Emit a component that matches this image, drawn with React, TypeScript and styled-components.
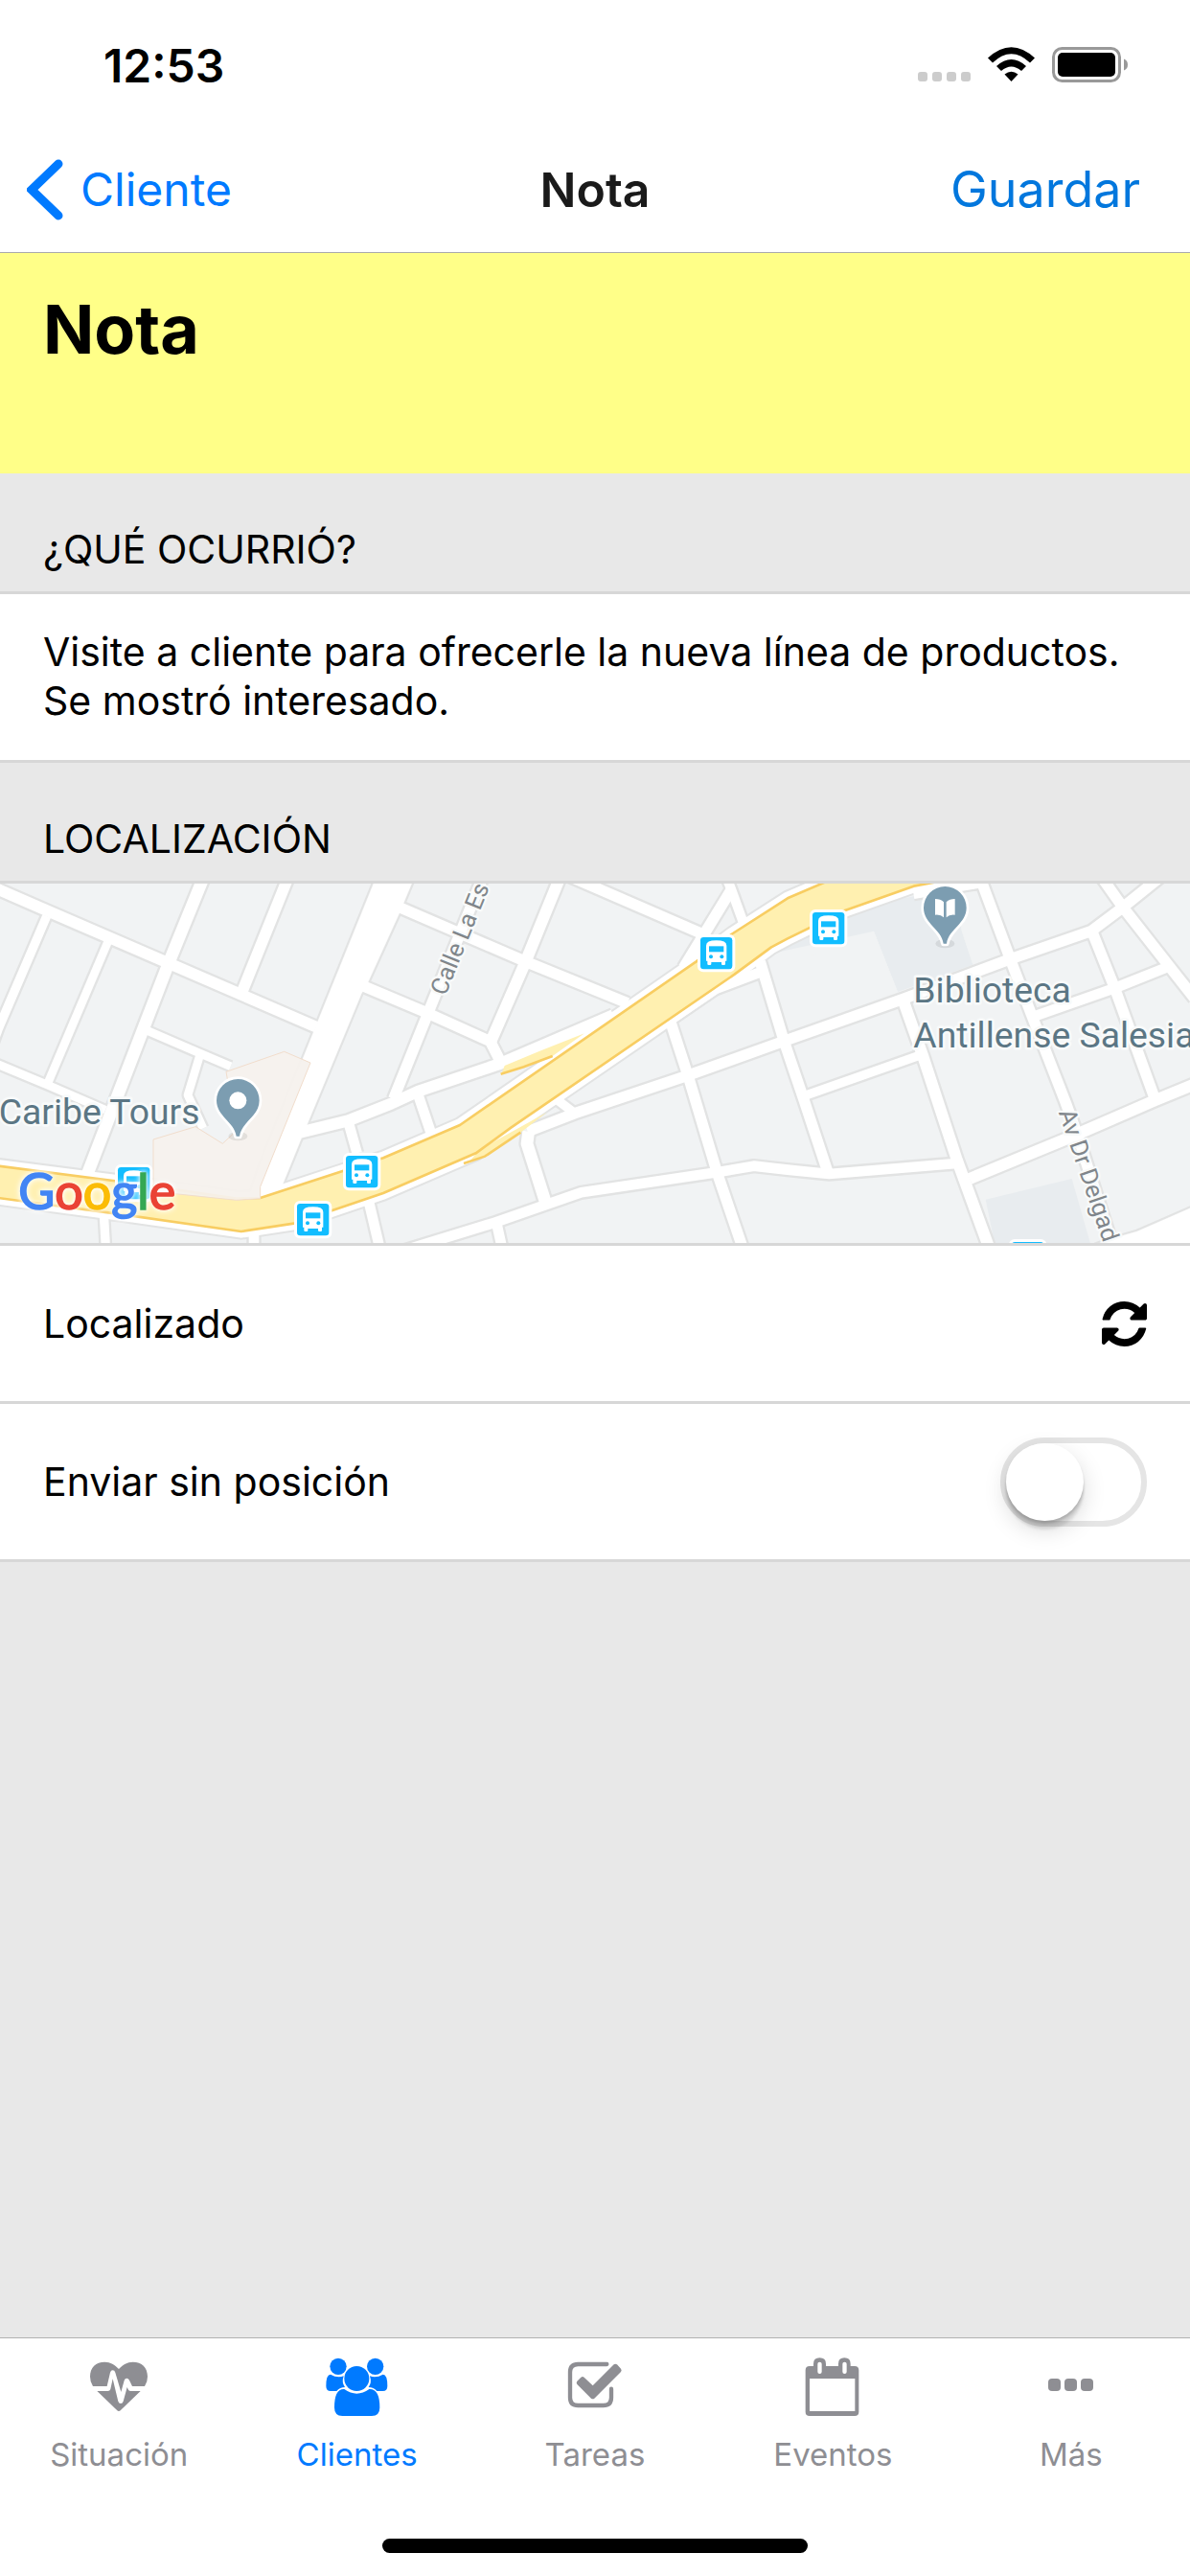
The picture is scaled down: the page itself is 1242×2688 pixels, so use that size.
import React, { useState } from 'react';
import styled, { createGlobalStyle } from 'styled-components';

const GlobalStyle = createGlobalStyle`
  * {
    box-sizing: border-box;
  }

  body {
    margin: 0;
    background: #ffffff;
    color: #000000;
    font-family: Inter, 'Liberation Sans', sans-serif;
  }

  button,
  input,
  textarea {
    margin: 0;
    padding: 0;
    border: none;
    background: none;
    color: inherit;
    font: inherit;
  }

  h1,
  h2,
  p {
    margin: 0;
  }
`;

/* ---------- map data ---------- */

interface Road {
  d: string;
  w: number;
}

const ROADS: Road[] = [
  { d: 'M-20 78L150 152L525 314L990 515', w: 35 },
  { d: 'M640 40L530 310L445 530L268 990', w: 38 },
  { d: 'M905 40L760 400', w: 35 },
  { d: 'M146 168L-5 520L-30 590', w: 28 },
  { d: 'M337 250L150 690', w: 26 },
  { d: 'M-20 626L150 697L330 775', w: 26 },
  { d: 'M460 526L620 595L722 638', w: 26 },
  { d: 'M625 606L588 728L636 832', w: 26 },
  { d: 'M1140 388L1340 472L1535 560L1568 625', w: 34 },
  { d: 'M1250 140L1650 312L1965 440', w: 34 },
  { d: 'M1756 40L1645 312L1537 560', w: 36 },
  { d: 'M1510 50L1340 472L1232 740', w: 34 },
  { d: 'M940 845L1090 808L1225 755L1310 716L1560 632L1920 478', w: 36 },
  { d: 'M1090 810L1118 910', w: 32 },
  { d: 'M1310 730L1354 860', w: 32 },
  { d: 'M1780 42L2200 224', w: 34 },
  { d: 'M2140 330L2195 240L2290 85', w: 34 },
  { d: 'M2272 40L2290 85L2328 190', w: 30 },
  { d: 'M2390 340L2240 396L2080 505', w: 32 },
  { d: 'M2100 500L2155 670L2245 970L2330 1220', w: 34 },
  { d: 'M2380 310L2455 560L2516 740L2592 970', w: 34 },
  { d: 'M1652 842L1800 785L2150 668L2466 555L2826 428L3156 305L3416 215L3516 140L3640 40', w: 34 },
  { d: 'M1735 736L1800 785', w: 28 },
  { d: 'M1655 842L1650 880L1710 1070', w: 38 },
  { d: 'M1240 1222L1540 1130L1820 1033L2245 970L2360 950L2466 962L2596 975L2995 942', w: 32 },
  { d: 'M1555 1130L1575 1220', w: 32 },
  { d: 'M325 1100L332 1220', w: 28 },
  { d: 'M795 1160L795 1220', w: 32 },
  { d: 'M1152 1050L1192 1220', w: 32 },
  { d: 'M3066 40L3166 310L3231 480L3336 750L3376 860L3490 1220', w: 34 },
  { d: 'M2831 440L2891 610L2996 930L3102 1220', w: 36 },
  { d: 'M2526 728L2876 605', w: 28 },
  { d: 'M3421 220L3491 395L3616 740', w: 34 },
  { d: 'M3236 482L3491 393L3661 325', w: 32 },
  { d: 'M3445 40L3516 140L3661 325L3740 425', w: 34 },
  { d: 'M3036 990L3346 862L3616 745L3750 690', w: 36 },
  { d: 'M2860 96L3080 60', w: 36 },
];

const AVENUE = 'M1180 40L1300 40L1250 160L1150 380L1132 410L945 860L880 1020L780 1050L815 945L992 505Z';
const CORNER = 'M3380 1216L3466 1182L3560 1155L3750 1072V1220Z';
const HIGHWAY =
  'M-20 948L400 1002L740 1052L815 1050L1075 965L1200 925L1440 822L2180 310L2290 225L2466 112L2610 50' +
  'H2990L2861 74L2646 150L2466 238L2415 265L2300 350L1600 830L1490 910L1200 1035L920 1130L755 1155L390 1103L-20 1048Z';

const BUS_STOPS = [
  [369, 954],
  [1083, 918],
  [930, 1068],
  [2193, 234],
  [2544, 156],
  [3168, 1188],
];

/* ---------- drawings ---------- */

const BusStop = ({ x, y }: { x: number; y: number }) => (
  <g transform={`translate(${x} ${y})`}>
    <rect x="-9" y="-9" width="118" height="118" rx="18" fill="#fff" />
    <rect width="100" height="100" rx="10" fill="#12bdff" />
    <path
      d="M18 26Q18 10 50 10Q82 10 82 26V74H78V84Q78 87 74 87H70Q66 87 66 84V78H34V84Q34 87 30 87H26Q22 87 22 84V74H18Z"
      fill="#fff"
    />
    <path d="M27 28H73V46H27Z" fill="#12bdff" />
    <circle cx="33" cy="61" r="6" fill="#12bdff" />
    <circle cx="67" cy="61" r="6" fill="#12bdff" />
  </g>
);

const Pin = ({ x, y, children }: { x: number; y: number; children: React.ReactNode }) => (
  <g transform={`translate(${x} ${y})`}>
    <ellipse cx="0" cy="112" rx="30" ry="14" fill="#000" opacity="0.08" />
    <path
      d="M0 -67A67 67 0 0 1 67 0C67 50 12 66 5 112H-5C-12 66 -67 50 -67 0A67 67 0 0 1 0 -67Z"
      fill="#7c9db1"
      stroke="#fff"
      strokeWidth="16"
      strokeLinejoin="round"
      paintOrder="stroke"
    />
    {children}
  </g>
);

const Map = () => (
  <MapCanvas viewBox="0 66 3726 1125" preserveAspectRatio="xMidYMid slice" role="img" aria-label="Mapa">
    <rect y="0" width="3726" height="1260" fill="#f1f3f4" />
    <path d="M2440 280L2736 215L2811 405L3046 320L3011 215L2990 80L2740 130L2440 210Z" fill="#e8ecef" />
    <path d="M2466 320L2736 215L2811 405L2466 520Z" fill="#f1f3f4" />
    <path d="M3086 1055L3356 990L3416 1200H3116Z" fill="#e8ecef" />

    <g fill="none" stroke="#e2e3e3" strokeLinejoin="round">
      {ROADS.map((r) => (
        <path key={r.d} d={r.d} strokeWidth={r.w + 14} />
      ))}
      <path d={AVENUE} strokeWidth="14" />
      <path d={CORNER} strokeWidth="14" />
      <path d={HIGHWAY} strokeWidth="52" />
    </g>
    <g fill="none" stroke="#fff" strokeLinejoin="round">
      {ROADS.map((r) => (
        <path key={r.d} d={r.d} strokeWidth={r.w} />
      ))}
      <path d={AVENUE} fill="#fff" />
      <path d={CORNER} fill="#fff" />
      <path d={HIGHWAY} strokeWidth="40" />
    </g>

    <path d="M1570 662L1580 636L1690 590L1830 535L1730 606Z" fill="#fff0b0" />
    <path d="M1568 662L1640 640L1730 606" fill="none" stroke="#f8cd62" strokeWidth="8" />
    <path d="M1470 936L1518 920L1630 845L1712 782L1500 900Z" fill="#fff0b0" />
    <path d="M1452 942L1518 920L1630 845" fill="none" stroke="#f8cd62" strokeWidth="8" />
    <path d={HIGHWAY} fill="#fff0b0" stroke="#f8cd62" strokeWidth="8" strokeLinejoin="round" />
    <path
      d="M708 655L890 592L972 627L815 1015V1052L740 1057L480 1030V867L612 827L697 880L740 840Z"
      fill="#f5f1ed"
      fillOpacity="0.94"
      stroke="#f1ddcc"
      strokeWidth="3"
    />

    {BUS_STOPS.map(([x, y]) => (
      <BusStop key={x} x={x} y={y} />
    ))}
    <Pin x={745} y={745}>
      <circle r="27" fill="#fff" />
    </Pin>
    <Pin x={2959} y={142}>
      <path d="M-31 -28Q-14 -28 -4 -18V30Q-14 20 -31 22ZM31 -28Q14 -28 4 -18V30Q14 20 31 22Z" fill="#fff" />
    </Pin>

    <PlaceLabel x="-4" y="820">Caribe Tours</PlaceLabel>
    <PlaceLabel x="2860" y="437">Biblioteca</PlaceLabel>
    <PlaceLabel x="2860" y="578">Antillense Salesia</PlaceLabel>
    <StreetLabel transform="translate(1394 420) rotate(-68)">Calle La Es</StreetLabel>
    <StreetLabel transform="translate(3314 782) rotate(71)">Av Dr Delgad</StreetLabel>

    <Brand x="58" y="1087">
      <BrandLetter $color="#4285f4">G</BrandLetter>
      <BrandLetter $color="#ea4335">o</BrandLetter>
      <BrandLetter $color="#fbbc05">o</BrandLetter>
      <BrandLetter $color="#4285f4">g</BrandLetter>
      <BrandLetter $color="#34a853">l</BrandLetter>
      <BrandLetter $color="#ea4335">e</BrandLetter>
    </Brand>
  </MapCanvas>
);

const StatusIcons = () => (
  <svg width="220" height="38" viewBox="0 0 220 38" aria-hidden="true">
    <g fill="#cccccc">
      <rect x="0" y="26" width="10" height="10" rx="3" />
      <rect x="15" y="26" width="10" height="10" rx="3" />
      <rect x="30" y="26" width="10" height="10" rx="3" />
      <rect x="45" y="26" width="10" height="10" rx="3" />
    </g>
    <path d="M73 11.500Q97.500 -11 122 11.500L117 16.500Q97.500 -2 78 16.500Z" />
    <path d="M82 20Q97.500 6 113 20L108 25Q97.500 16 87 25Z" />
    <path d="M90.500 28.500Q97.500 23 104.500 28.500L97.500 36Z" />
    <rect x="141.500" y="1.500" width="69" height="34" rx="9" fill="none" stroke="#999999" strokeWidth="3" />
    <rect x="146" y="6" width="60" height="25" rx="5" />
    <path d="M215 12.500Q219 14 219 18.500T215 24.500Z" fill="#999999" />
  </svg>
);

const Refresh = () => (
  <svg width="47" height="47" viewBox="0 0 1536 1536" aria-hidden="true">
    <path d="M1511 928q0 5-1 7-64 268-268 434.500t-478 166.500q-146 0-282.500-55t-243.500-157l-129 129q-19 19-45 19t-45-19-19-45v-448q0-26 19-45t45-19h448q26 0 45 19t19 45-19 45l-137 137q71 66 161 102t187 36q134 0 250-65t186-179q11-17 53-117 8-23 30-23h192q13 0 22.500 9.500t9.500 22.500zM1536 128v448q0 26-19 45t-45 19h-448q-26 0-45-19t-19-45 19-45l138-138q-148-137-349-137-134 0-250 65t-186 179q-11 17-53 117-8 23-30 23h-199q-13 0-22.500-9.500t-9.500-22.500v-7q65-268 270-434.500t480-166.500q146 0 284 55.500t245 156.500l130-129q19-19 45-19t45 19 19 45z" />
  </svg>
);

const HeartIcon = () => (
  <TabIcon viewBox="24 27 216 216" aria-hidden="true">
    <path d="M132 213Q129 213 127 211L64 150H98Q104 150 106 144L113 112L130 182Q132 189 138 189Q144 189 146 182L158 138L162 146Q164 150 170 150H200L137 211Q135 213 132 213Z" />
    <path d="M51 135Q42 122 42 105C42 76 60 59 88 59C106 59 119 68 132 81C145 68 158 59 176 59C204 59 222 76 222 105Q222 122 213 135H174L165 116Q162 110 157 110Q151 110 149 117L139 153L121 92Q119 85 113 85Q107 85 105 92L95 135Z" />
  </TabIcon>
);

const PeopleIcon = () => (
  <TabIcon viewBox="767 27 216 216" aria-hidden="true">
    <circle cx="815" cy="73" r="26" />
    <circle cx="931" cy="73" r="26" />
    <circle cx="873" cy="111" r="39" />
    <path d="M791 98Q812 110 832 103Q825 124 836 138Q820 138 810 150H791Q777 150 777 134Q777 98 791 98Z" />
    <path d="M955 98Q934 110 914 103Q921 124 910 138Q926 138 936 150H955Q969 150 969 134Q969 98 955 98Z" />
    <path d="M834 144Q873 172 912 144Q945 142 945 202Q945 228 920 228H828Q803 228 803 202Q803 142 834 144Z" />
  </TabIcon>
);

const CheckIcon = () => (
  <TabIcon viewBox="15 27 216 216" aria-hidden="true">
    <path
      d="M160 66H70Q45 66 45 91V170Q45 195 70 195H149Q174 195 174 170V143"
      fill="none"
      stroke="currentColor"
      strokeWidth="13"
      strokeLinecap="round"
    />
    <path d="M182 67Q187 63 192 67L204 80Q208 85 204 90L121 173Q116 177 111 173L67 129Q63 124 67 119L79 107Q84 103 89 107L116 133Z" />
  </TabIcon>
);

const CalendarIcon = () => (
  <TabIcon viewBox="760 27 216 216" aria-hidden="true">
    <path
      fillRule="evenodd"
      d="M796 72H808V65Q808 46 827.500 46T847 65V72H886V65Q886 46 905 46T924 65V72H937Q950 72 950 85V215Q950 228 937 228H796Q783 228 783 215V85Q783 72 796 72ZM796 111V213H938V111ZM821 65V90Q821 96 827.500 96T834 90V65Q834 59 827.500 59T821 65ZM899 65V90Q899 96 905.500 96T912 90V65Q912 59 905.500 59T899 65Z"
    />
  </TabIcon>
);

const MoreIcon = () => (
  <TabIcon viewBox="0 0 72 72" aria-hidden="true">
    <rect x="12" y="28" width="13" height="13" rx="4" />
    <rect x="29" y="28" width="13" height="13" rx="4" />
    <rect x="46" y="28" width="13" height="13" rx="4" />
  </TabIcon>
);

const TABS = [
  { label: 'Situación', icon: <HeartIcon /> },
  { label: 'Clientes', icon: <PeopleIcon /> },
  { label: 'Tareas', icon: <CheckIcon /> },
  { label: 'Eventos', icon: <CalendarIcon /> },
  { label: 'Más', icon: <MoreIcon /> },
];

/* ---------- page ---------- */

const App = () => {
  const [note, setNote] = useState(
    'Visite a cliente para ofrecerle la nueva línea de productos. Se mostró interesado.'
  );
  const [withoutPosition, setWithoutPosition] = useState(false);
  const [activeTab, setActiveTab] = useState('Clientes');

  return (
    <Screen>
      <GlobalStyle />
      <StatusBar>
        <Clock>12:53</Clock>
        <StatusIcons />
      </StatusBar>
      <NavBar>
        <BackButton type="button">
          <svg width="38" height="64" viewBox="0 0 38 64" aria-hidden="true">
            <path d="M33 5L5 32L33 59" fill="none" stroke="currentColor" strokeWidth="9" strokeLinecap="round" />
          </svg>
          Cliente
        </BackButton>
        <NavTitle>Nota</NavTitle>
        <SaveButton type="button">Guardar</SaveButton>
      </NavBar>

      <Content>
        <NoteHeader>
          <h1>Nota</h1>
        </NoteHeader>
        <SectionTitle>
          <label htmlFor="note">¿QUÉ OCURRIÓ?</label>
        </SectionTitle>
        <NoteField>
          <textarea id="note" rows={2} value={note} onChange={(e) => setNote(e.target.value)} />
        </NoteField>
        <SectionTitle>LOCALIZACIÓN</SectionTitle>
        <Map />
        <Row>
          <span>Localizado</span>
          <IconButton type="button" aria-label="Actualizar">
            <Refresh />
          </IconButton>
        </Row>
        <Row>
          <label htmlFor="position">Enviar sin posición</label>
          <Toggle
            id="position"
            type="checkbox"
            checked={withoutPosition}
            onChange={(e) => setWithoutPosition(e.target.checked)}
          />
        </Row>
      </Content>

      <TabBar>
        {TABS.map((tab) => (
          <Tab
            key={tab.label}
            type="button"
            $active={tab.label === activeTab}
            onClick={() => setActiveTab(tab.label)}
          >
            {tab.icon}
            {tab.label}
          </Tab>
        ))}
      </TabBar>
      <HomeArea>
        <HomeIndicator />
      </HomeArea>
    </Screen>
  );
};

const Screen = styled.div`
  display: flex;
  flex-direction: column;
  min-height: 100vh;
`;

const StatusBar = styled.header`
  display: flex;
  align-items: center;
  justify-content: space-between;
  height: 132px;
  padding: 4px 64px 0 108px;
`;

const Clock = styled.span`
  font-size: 48px;
  font-weight: 600;
`;

const NavBar = styled.nav`
  display: grid;
  grid-template-columns: minmax(0, 1fr) auto minmax(0, 1fr);
  align-items: center;
  height: 132px;
  border-bottom: 1px solid #a9a9ad;
`;

const BackButton = styled.button`
  display: flex;
  align-items: center;
  justify-self: start;
  gap: 18px;
  padding-left: 28px;
  color: #007aff;
  font-size: 48px;
  cursor: pointer;
`;

const NavTitle = styled.p`
  color: #1a1a1a;
  font-size: 50px;
  font-weight: 600;
`;

const SaveButton = styled.button`
  justify-self: end;
  padding-right: 52px;
  color: #0277dd;
  font-size: 52px;
  cursor: pointer;
`;

const Content = styled.main`
  flex: 1;
  background: #e8e8e8;
  font-size: 41px;
`;

const NoteHeader = styled.div`
  height: 230px;
  padding: 37px 45px;
  background: #ffff88;

  h1 {
    font-size: 70px;
    font-weight: 700;
    line-height: 86px;
  }
`;

const SectionTitle = styled.h2`
  padding: 54px 45px 19px;
  border-bottom: 3px solid #d7d7d7;
  font-size: 41px;
  font-weight: 400;
  line-height: 50px;
`;

const NoteField = styled.div`
  padding: 35px 45px 36px;
  border-bottom: 3px solid #d7d7d7;
  background: #ffffff;

  textarea {
    display: block;
    width: 100%;
    line-height: 51px;
    resize: none;
    outline: none;
    overflow: hidden;
  }
`;

const MapCanvas = styled.svg`
  display: block;
  width: 100%;
  height: 378px;
  border-bottom: 3px solid #d7d7d7;
`;

const PlaceLabel = styled.text`
  fill: #5b7684;
  stroke: #f8fafa;
  stroke-width: 16px;
  stroke-linejoin: round;
  paint-order: stroke;
  font-family: Roboto, sans-serif;
  font-size: 112px;
`;

const StreetLabel = styled.text`
  fill: #80868b;
  stroke: #f8fafa;
  stroke-width: 14px;
  stroke-linejoin: round;
  paint-order: stroke;
  font-family: Roboto, sans-serif;
  font-size: 76px;
`;

const Brand = styled.text`
  filter: drop-shadow(0 0 6px rgba(255, 255, 255, 0.9)) drop-shadow(0 0 10px rgba(255, 255, 255, 0.8));
  font-family: Lato, sans-serif;
  font-size: 156px;
`;

const BrandLetter = styled.tspan<{ $color: string }>`
  fill: ${({ $color }) => $color};
  stroke: ${({ $color }) => $color};
  stroke-width: 5px;
`;

const Row = styled.div`
  display: flex;
  align-items: center;
  justify-content: space-between;
  height: 165px;
  padding: 0 45px;
  border-bottom: 3px solid #d7d7d7;
  background: #ffffff;
`;

const IconButton = styled.button`
  display: flex;
  cursor: pointer;
`;

const Toggle = styled.input`
  display: flex;
  width: 153px;
  height: 93px;
  border: 6px solid #e5e5e5;
  border-radius: 47px;
  appearance: none;
  cursor: pointer;

  &::before {
    content: '';
    width: 81px;
    height: 81px;
    border-radius: 50%;
    background: #ffffff;
    box-shadow: 0 9px 24px rgba(0, 0, 0, 0.15), 0 3px 3px rgba(0, 0, 0, 0.16), 0 9px 3px rgba(0, 0, 0, 0.1);
  }

  &:checked {
    border-color: #4cd964;
    background: #4cd964;
    justify-content: flex-end;
  }
`;

const TabBar = styled.nav`
  display: grid;
  grid-template-columns: repeat(5, 1fr);
  border-top: 1px solid #b2b2b2;
`;

const Tab = styled.button<{ $active: boolean }>`
  display: flex;
  flex-direction: column;
  align-items: center;
  gap: 15px;
  padding-top: 14px;
  color: ${({ $active }) => ($active ? '#007aff' : '#8e8e93')};
  font-size: 33px;
  line-height: 40px;
  cursor: pointer;
`;

const TabIcon = styled.svg`
  width: 72px;
  height: 72px;
  fill: currentColor;
`;

const HomeArea = styled.footer`
  display: flex;
  justify-content: center;
  padding: 68px 0 24px;
`;

const HomeIndicator = styled.div`
  width: 444px;
  height: 15px;
  border-radius: 8px;
  background: #000000;
`;

export default App;
